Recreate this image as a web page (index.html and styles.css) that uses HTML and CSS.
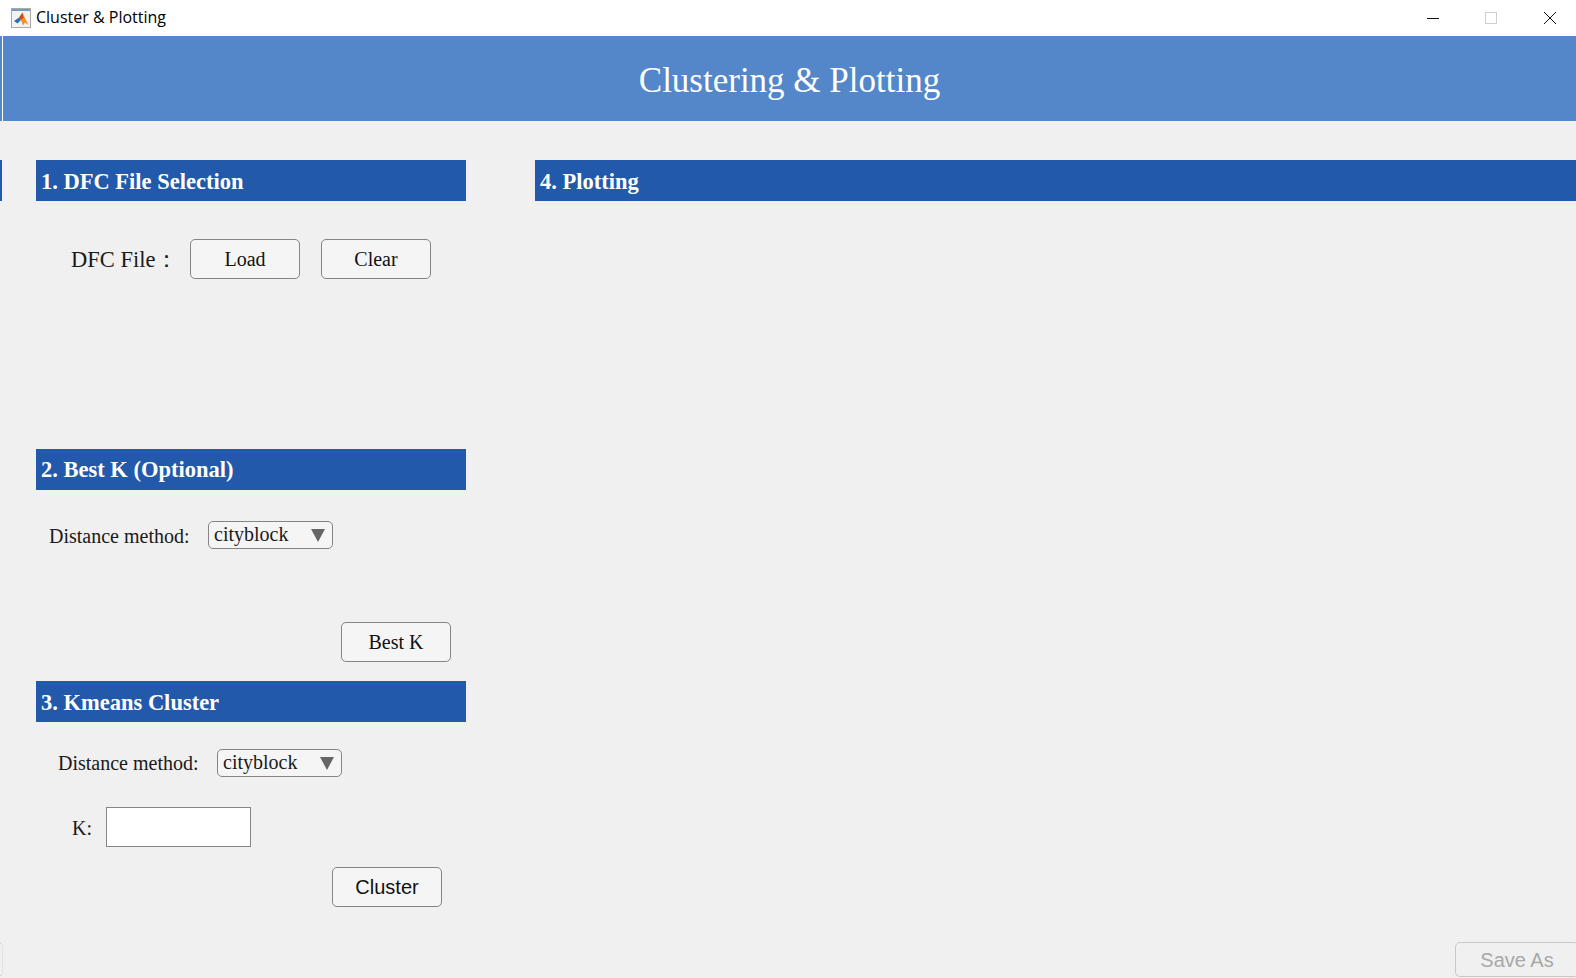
FILE: index.html
```html
<!DOCTYPE html>
<html lang="en">
<head>
<meta charset="utf-8">
<title>Cluster &amp; Plotting</title>
<link rel="stylesheet" href="styles.css">
</head>
<body>
<div class="titlebar">
  <svg class="app-icon" width="20" height="20" viewBox="0 0 20 20">
    <rect x="0.5" y="0.5" width="19" height="19" fill="#f2f2f2" stroke="#a9a9a9"/>
    <rect x="1" y="1" width="18" height="2" fill="#6f9bc4"/>
    <path d="M3 13 L8 9.5 L10 12 L6.5 15.5 Z" fill="#2f6fb5"/>
    <path d="M8 9.5 L11.5 4.5 L13 10 L10 12 Z" fill="#c9471d"/>
    <path d="M11.5 4.5 L14 10 L17.5 17 L14 14.5 L12 17.5 L10 12 L13 10 Z" fill="#f0901f"/>
  </svg>
  <span class="app-title">Cluster &amp; Plotting</span>
  <div class="win-controls">
    <svg class="win-btn" width="14" height="14" viewBox="0 0 14 14"><path d="M1 7.5H13" stroke="#111" stroke-width="1"/></svg>
    <svg class="win-btn" width="14" height="14" viewBox="0 0 14 14"><rect x="1.5" y="1.5" width="11" height="11" fill="none" stroke="#cfcfcf"/></svg>
    <svg class="win-btn win-close" width="14" height="14" viewBox="0 0 14 14"><path d="M1 1L13 13M13 1L1 13" stroke="#111" stroke-width="1"/></svg>
  </div>
</div>
<div class="banner-row">
  <div class="edge"></div>
  <h1 class="banner">Clustering &amp; Plotting</h1>
</div>
<div class="stub-bottom"></div>
<div class="main">
  <div class="stub-head"></div>
  <div class="left">
    <section class="panel panel-file">
      <h2 class="head">1. DFC File Selection</h2>
      <div class="row row-file">
        <span class="label label-big">DFC File：</span>
        <button class="btn">Load</button>
        <button class="btn">Clear</button>
      </div>
    </section>
    <section class="panel panel-best">
      <h2 class="head">2. Best K (Optional)</h2>
      <div class="row row-dist-a">
        <span class="label label-dist">Distance method:</span>
        <div class="drop"><span>cityblock</span><i class="arrow"></i></div>
      </div>
      <div class="row row-best">
        <button class="btn">Best K</button>
      </div>
    </section>
    <section class="panel">
      <h2 class="head">3. Kmeans Cluster</h2>
      <div class="row row-dist-b">
        <span class="label label-dist">Distance method:</span>
        <div class="drop"><span>cityblock</span><i class="arrow"></i></div>
      </div>
      <div class="row row-k">
        <span class="label label-k">K:</span>
        <div class="input"></div>
      </div>
      <div class="row row-cluster">
        <button class="btn btn-sans">Cluster</button>
      </div>
    </section>
  </div>
  <div class="right">
    <h2 class="head">4. Plotting</h2>
    <button class="btn btn-sans btn-save">Save As</button>
  </div>
</div>
</body>
</html>
```

FILE: styles.css
```css
* { box-sizing: border-box; }
html, body { margin: 0; height: 100%; }
body {
  width: 1576px;
  height: 978px;
  overflow: hidden;
  position: relative;
  background: #f0f0f0;
  font-family: "Liberation Serif", serif;
  color: #1a1a1a;
}
.titlebar {
  height: 36px;
  background: #fff;
  display: flex;
  align-items: center;
  padding-left: 11px;
}
.app-icon { flex: none; }
.app-title {
  margin-left: 5px;
  margin-top: -3px;
  font: 16px "Open Sans", sans-serif;
  color: #000;
}
.win-controls {
  margin-left: auto;
  display: flex;
  gap: 44px;
  padding-right: 19px;
}
.win-btn { display: block; }
.win-close { margin-left: 1px; }
.banner-row { display: flex; height: 85px; background: #fff; }
.edge { width: 2px; background: #5387c9; }
.banner {
  flex: 1;
  margin: 0 0 0 1px;
  background: #5387c9;
  color: #fff;
  font-size: 35px;
  font-weight: 400;
  line-height: 85px;
  text-align: center;
  padding-top: 2px;
}
.main {
  display: flex;
  height: 857px;
  padding-top: 39px;
}
.stub-head {
  width: 2px;
  height: 41px;
  margin-right: 34px;
  background: #2259ab;
  flex: none;
}
.stub-bottom {
  position: absolute;
  left: -8px;
  top: 942px;
  width: 11px;
  height: 35px;
  border: 1px solid #cacaca;
  border-right-color: #e2e2e2;
  border-radius: 5px;
}
.left { width: 430px; flex: none; }
.right {
  flex: 1;
  margin-left: 69px;
  display: flex;
  flex-direction: column;
}
.panel-file { height: 289px; }
.panel-best { height: 232px; }
.head {
  margin: 0;
  height: 41px;
  padding-left: 5px;
  background: #2259ab;
  color: #fff;
  font-size: 22.5px;
  font-weight: 700;
  line-height: 43px;
}
.panel-best .head { line-height: 42px; }
.row { display: flex; align-items: center; }
.label { white-space: nowrap; }
.label-big { font-size: 22.5px; flex: 0 0 119px; }
.label-dist { font-size: 20px; }
.label-k { font-size: 20px; padding-top: 2px; }
.row-file { padding: 38px 0 0 35px; }
.row-file .btn + .btn { margin-left: 21px; }
.row-dist-a { padding: 31px 0 0 13px; }
.row-dist-a .label-dist { flex: 0 0 159px; padding-top: 3px; }
.row-best { margin-top: 73px; padding-left: 305px; }
.row-dist-b { padding: 27px 0 0 22px; }
.row-dist-b .label-dist { flex: 0 0 159px; padding-top: 1px; }
.row-k { margin-top: 30px; padding-left: 36px; }
.row-k .label-k { flex: 0 0 34px; }
.row-cluster { margin-top: 20px; padding-left: 296px; }
.btn {
  flex: none;
  width: 110px;
  height: 40px;
  padding: 0;
  background: #f5f5f5;
  border: 1px solid #858585;
  border-radius: 5px;
  font-family: "Liberation Serif", serif;
  font-size: 20px;
  color: #111;
}
.btn-sans { font-family: "Liberation Sans", sans-serif; font-size: 20px; }
.btn-save {
  margin-top: auto;
  margin-bottom: 1px;
  margin-right: -3px;
  align-self: flex-end;
  width: 124px;
  height: 35px;
  padding-top: 2px;
  background: #f0f0f0;
  border-color: #c8c8c8;
  color: #a8a8a8;
}
.drop {
  width: 125px;
  height: 28px;
  display: flex;
  align-items: center;
  justify-content: space-between;
  padding: 0 7px 2px 5px;
  background: #f5f5f5;
  border: 1px solid #858585;
  border-radius: 5px;
  font-size: 20px;
}
.arrow {
  width: 0;
  height: 0;
  border-left: 7px solid transparent;
  border-right: 7px solid transparent;
  border-top: 13px solid #666;
  margin-top: 2px;
}
.input {
  width: 145px;
  height: 40px;
  background: #fff;
  border: 1px solid #858585;
}
```
